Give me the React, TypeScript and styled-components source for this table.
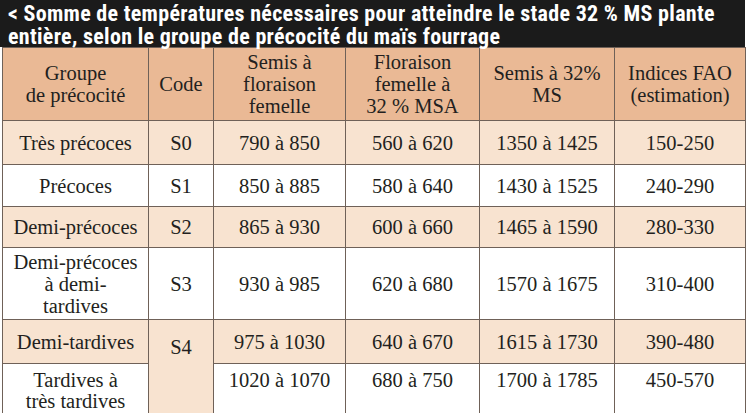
import styled, { createGlobalStyle } from "styled-components";

const GlobalStyle = createGlobalStyle`
    html, body {
        margin: 0;
        padding: 0;
        background: #ffffff;
    }
`

const Wrapper = styled.div`
    width: 747px;
    padding-left: 2px;
    box-sizing: border-box;
`

const TitleBar = styled.h2`
    position: relative;
    z-index: 1;
    margin: 0 0 0 -2px;
    width: 745px;
    height: 47px;
    box-sizing: border-box;
    padding: 2px 0 0 8px;
    background-color: #1b1b1b;
    color: #ffffff;
    font-family: "Roboto Condensed", "DejaVu Sans Condensed", sans-serif;
    font-weight: 700;
    font-size: 22px;
    letter-spacing: 0.3px;
    line-height: 23px;
    white-space: nowrap;
`

const Table = styled.table`
    border-collapse: collapse;
    table-layout: fixed;
    width: 743px;
`

const cellText = `
    font-family: "Liberation Serif", "DejaVu Serif", serif;
    font-size: 20.5px;
    color: #231f20;
    border: 1.5px solid #6f6158;
    text-align: center;
`

const HeadCell = styled.th`
    ${cellText}
    background-color: #eab995;
    font-weight: 400;
    line-height: 22px;
    height: 72px;
    padding: 0 4px;
    vertical-align: middle;
`

const Cell = styled.td<{ $shaded?: boolean; $h?: number; $top?: number; $lh?: number }>`
    ${cellText}
    background-color: ${(p) => (p.$shaded ? "#f8e3d0" : "#ffffff")};
    height: ${(p) => p.$h ?? 41}px;
    line-height: ${(p) => p.$lh ?? 22}px;
    padding: ${(p) => (p.$top !== undefined ? `${p.$top}px 4px 0` : "0 4px")};
    vertical-align: ${(p) => (p.$top !== undefined ? "top" : "middle")};
`

const cols = [146, 65, 132, 134, 135, 131]

const rows = [
    { group: "Très précoces", code: "S0", a: "790 à 850", b: "560 à 620", c: "1350 à 1425", fao: "150-250", shaded: true, h: 43 },
    { group: "Précoces", code: "S1", a: "850 à 885", b: "580 à 640", c: "1430 à 1525", fao: "240-290", shaded: false, h: 41 },
    { group: "Demi-précoces", code: "S2", a: "865 à 930", b: "600 à 660", c: "1465 à 1590", fao: "280-330", shaded: true, h: 40 },
]

const lastRow = ["1020 à 1070", "680 à 750", "1700 à 1785", "450-570"]

export default function App() {
    return (
        <>
            <GlobalStyle />
            <Wrapper>
                <TitleBar>
                    &lt; Somme de températures nécessaires pour atteindre le stade 32 % MS plante<br />
                    entière, selon le groupe de précocité du maïs fourrage
                </TitleBar>
                <Table>
                    <colgroup>
                        {cols.map((w, i) => (
                            <col key={i} style={{ width: w }} />
                        ))}
                    </colgroup>
                    <thead>
                        <tr>
                            <HeadCell>Groupe<br />de précocité</HeadCell>
                            <HeadCell>Code</HeadCell>
                            <HeadCell>Semis à<br />floraison<br />femelle</HeadCell>
                            <HeadCell>Floraison<br />femelle à<br />32 % MSA</HeadCell>
                            <HeadCell>Semis à 32%<br />MS</HeadCell>
                            <HeadCell>Indices FAO<br />(estimation)</HeadCell>
                        </tr>
                    </thead>
                    <tbody>
                        {rows.map((r) => (
                            <tr key={r.code}>
                                <Cell $shaded={r.shaded} $h={r.h}>{r.group}</Cell>
                                <Cell $shaded={r.shaded} $h={r.h}>{r.code}</Cell>
                                <Cell $shaded={r.shaded} $h={r.h}>{r.a}</Cell>
                                <Cell $shaded={r.shaded} $h={r.h}>{r.b}</Cell>
                                <Cell $shaded={r.shaded} $h={r.h}>{r.c}</Cell>
                                <Cell $shaded={r.shaded} $h={r.h}>{r.fao}</Cell>
                            </tr>
                        ))}
                        <tr>
                            <Cell $h={71}>Demi-précoces<br />à demi-<br />tardives</Cell>
                            <Cell $h={71}>S3</Cell>
                            <Cell $h={71}>930 à 985</Cell>
                            <Cell $h={71}>620 à 680</Cell>
                            <Cell $h={71}>1570 à 1675</Cell>
                            <Cell $h={71}>310-400</Cell>
                        </tr>
                        <tr>
                            <Cell $shaded $h={43}>Demi-tardives</Cell>
                            <Cell $shaded rowSpan={2} $top={16}>S4</Cell>
                            <Cell $shaded $h={43}>975 à 1030</Cell>
                            <Cell $shaded $h={43}>640 à 670</Cell>
                            <Cell $shaded $h={43}>1615 à 1730</Cell>
                            <Cell $shaded $h={43}>390-480</Cell>
                        </tr>
                        <tr>
                            <Cell $h={50} $top={6} $lh={21}>Tardives à<br />très tardives</Cell>
                            {lastRow.map((v) => (
                                <Cell key={v} $h={50} $top={6} $lh={21}>{v}</Cell>
                            ))}
                        </tr>
                    </tbody>
                </Table>
            </Wrapper>
        </>
    )
}
